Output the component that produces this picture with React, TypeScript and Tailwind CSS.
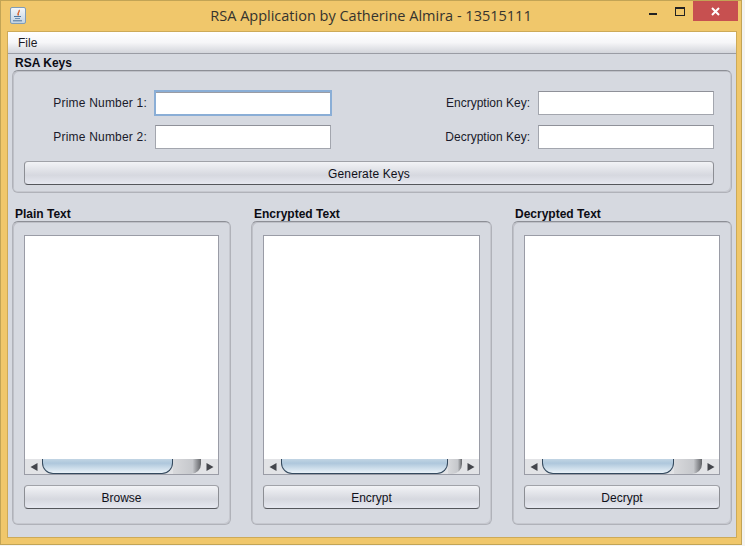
import React from "react";

function Field({ label, focus, labelW, track }: { label: string; focus?: boolean; labelW: string; track?: string }) {
  return (
    <div className="flex items-center h-[24px]">
      <span className={`${labelW} ${track ?? ""} text-right pr-[8px] text-[12px] text-[#1a1a2a]`}>{label}</span>
      <div
        className={`w-[176px] h-[24px] bg-white border ${
          focus
            ? "border-[#8aaed6] shadow-[0_0_0_1px_#8aaed6,inset_0_1px_0_#9a9ca4]"
            : "border-[#a3a6ae] border-t-[#8f9199]"
        }`}
      />
    </div>
  );
}

function Btn({ label, className, track }: { label: string; className: string; track?: string }) {
  return (
    <div
      className={`${className} ${track ?? ""} h-[24px] shrink-0 rounded-[4px] border border-t-[#a0a2a8] border-x-[#8c8e94] border-b-[#55575c] bg-gradient-to-b from-[#f2f3f6] via-[#d6d8df] via-60% to-[#e6e8f0] flex items-center justify-center pt-[2px] text-[12px] text-[#10101a]`}
    >
      {label}
    </div>
  );
}

function Arrow({ dir }: { dir: "l" | "r" }) {
  return (
    <svg width="8" height="8" viewBox="0 0 8 8" className="shrink-0">
      <path d={dir === "l" ? "M0.5 4 L7.5 0 V8 Z" : "M7.5 4 L0.5 0 V8 Z"} fill="#44464c" />
    </svg>
  );
}

function TextPane({
  title,
  btn,
  panelW,
  thumbW,
  ml,
}: {
  title: string;
  btn: string;
  panelW: string;
  thumbW: string;
  ml: string;
}) {
  return (
    <div className={`${panelW} ${ml} flex flex-col shrink-0`}>
      <div className="h-[14px] mt-[14px] ml-[3px] text-[12px] leading-[14px] font-bold text-[#0c0c14]">{title}</div>
      <div className="h-[304px] rounded-[6px] border border-[#b0b2b9] border-t-[#8d8f96] shadow-[inset_1px_1px_0_#bfc1c8,inset_-1px_-1px_0_#c6c8cf] bg-[#d6d9e0] px-[11px] pt-[13px] flex flex-col">
        <div className="flex-none h-[240px] border border-[#9a9ca6] bg-white flex flex-col">
          <div className="flex-1" />
          <div className="h-[15px] bg-[#e2e3e6] flex items-stretch">
            <div className="w-[17px] flex items-center justify-center shrink-0">
              <Arrow dir="l" />
            </div>
            <div
              className={`${thumbW} shrink-0 rounded-b-[11px] border-x border-b border-[#34495e] bg-gradient-to-b from-[#c2d5e4] via-[#aec7dc] via-30% to-[#eaf2f8]`}
            />
            <div className="flex-1 rounded-br-[10px] bg-gradient-to-r from-[#d8d9dc] via-[#c6c8cc] via-70% to-[#636569]" />
            <div className="w-[17px] flex items-center justify-center shrink-0">
              <Arrow dir="r" />
            </div>
          </div>
        </div>
        <Btn label={btn} className="w-full mt-[10px]" />
      </div>
    </div>
  );
}

export default function App() {
  return (
    <div
      className="w-[745px] h-[546px] bg-[#f4f4f4] overflow-hidden"
      style={{ fontFamily: '"Liberation Sans", Arial, sans-serif' }}
    >
      <div className="w-[742px] h-[545px] bg-[#f0c76b] border border-[#c2a455] flex flex-col">
        <div className="h-[30px] flex items-center relative shrink-0">
          <div className="absolute left-[9px] top-[6px] w-[16px] h-[17px] rounded-[2px] border border-[#7f9db9] bg-gradient-to-b from-[#f4f7fa] to-[#c3d3e2] flex items-center justify-center">
            <svg width="12" height="13" viewBox="0 0 12 13">
              <path d="M7 1 C8.5 3 4.5 3.5 6.5 6.5" stroke="#d9622b" strokeWidth="1.4" fill="none" />
              <path d="M2 7 H9 V8 H2 Z M3 9.2 H8 V10 H3 Z" fill="#4f79a3" />
              <path d="M1 11.8 H10" stroke="#4d7399" strokeWidth="1" />
            </svg>
          </div>
          <div
            className="w-full text-center text-[14.5px] text-[#35332e] pb-[1px]"
            style={{ fontFamily: '"Open Sans", sans-serif' }}
          >
            RSA Application by Catherine Almira - 13515111
          </div>
          <div className="absolute right-[84px] top-[12px] w-[8px] h-[2px] bg-[#222]" />
          <div className="absolute right-[56px] top-[6px] w-[10px] h-[9px] border border-[#222] border-t-2" />
          <div className="absolute right-[3px] top-0 w-[45px] h-[20px] bg-[#c75050] flex items-center justify-center">
            <svg width="9" height="9" viewBox="0 0 9 9">
              <path d="M1 1 L8 8 M8 1 L1 8" stroke="#fff" strokeWidth="2" />
            </svg>
          </div>
        </div>

        <div className="ml-[6px] w-[730px] h-[507px] border border-[#cdaa58] bg-[#d6d9e0] flex flex-col shrink-0">
          <div className="h-[22px] shrink-0 bg-gradient-to-b from-[#ffffff] via-[#f6f6f8] to-[#d3d5db] border-b border-[#9a9ca4] flex items-center pl-[10px] text-[12px] text-[#1a1a24]">
            File
          </div>

          <div className="h-[14px] shrink-0 mt-[2px] ml-[7px] text-[12px] leading-[14px] font-bold text-[#0c0c14]">RSA Keys</div>
          <div className="ml-[4px] w-[720px] h-[123px] shrink-0 rounded-[6px] border border-[#b0b2b9] border-t-[#8d8f96] shadow-[inset_1px_1px_0_#bfc1c8,inset_-1px_-1px_0_#c6c8cf] pl-[11px] pr-[17px] flex flex-col">
            <div className="flex justify-between pt-[20px]">
              <Field label="Prime Number 1:" focus labelW="w-[131px]" track="tracking-[0.2px]" />
              <Field label="Encryption Key:" labelW="w-[120px]" />
            </div>
            <div className="flex justify-between pt-[10px]">
              <Field label="Prime Number 2:" labelW="w-[131px]" track="tracking-[0.2px]" />
              <Field label="Decryption Key:" labelW="w-[120px]" />
            </div>
            <Btn label="Generate Keys" className="w-full mt-[12px]" track="tracking-[0.15px]" />
          </div>

          <div className="flex pl-[4px]">
            <TextPane title="Plain Text" btn="Browse" panelW="w-[219px]" thumbW="w-[131px]" ml="ml-0" />
            <TextPane title="Encrypted Text" btn="Encrypt" panelW="w-[241px]" thumbW="w-[167px]" ml="ml-[20px]" />
            <TextPane title="Decrypted Text" btn="Decrypt" panelW="w-[220px]" thumbW="w-[132px]" ml="ml-[20px]" />
          </div>
        </div>
      </div>
    </div>
  );
}
